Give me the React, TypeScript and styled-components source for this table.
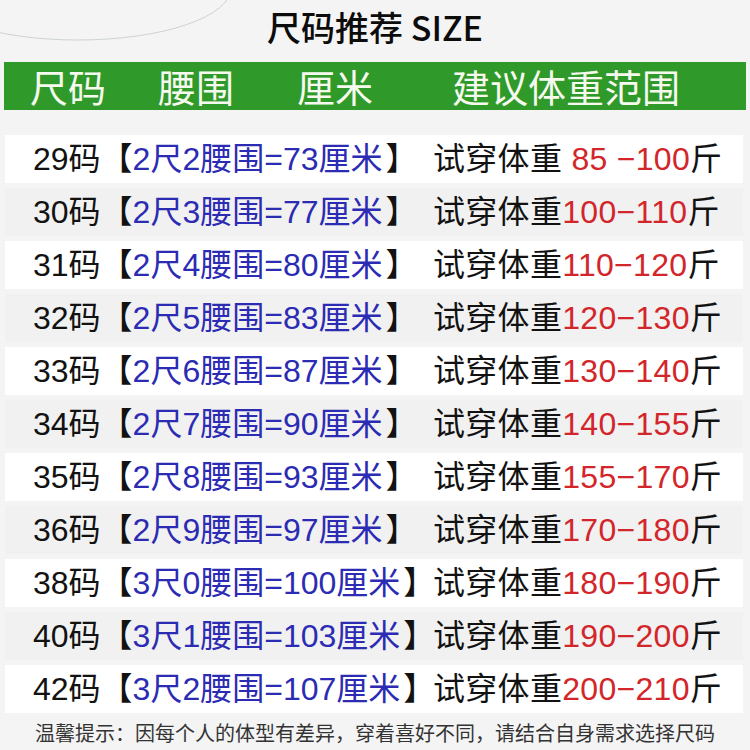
import React from "react";
import styled, { createGlobalStyle } from "styled-components";

const GlobalStyle = createGlobalStyle`
  html, body {
    margin: 0;
    padding: 0;
    background: #f4f4f4;
  }
  * { box-sizing: border-box; }
`;

const Page = styled.div`
  position: relative;
  width: 750px;
  height: 750px;
  overflow: hidden;
  background: #f4f4f4;
  font-family: "Liberation Sans", "Noto Sans CJK SC", sans-serif;
  color: #111;
`;

const Decor = styled.svg`
  position: absolute;
  left: 0;
  top: 0;
  pointer-events: none;
`;

const Title = styled.h1`
  margin: 0;
  height: 62px;
  padding-bottom: 10px;
  display: flex;
  align-items: center;
  justify-content: center;
  font-family: "Noto Sans CJK SC", sans-serif;
  font-size: 34px;
  font-weight: 500;
  color: #0c0c0c;
`;

const HeaderBar = styled.div`
  margin: 0 4px;
  height: 48px;
  background: #2f9a2a;
  display: grid;
  grid-template-columns: 128px 139px 155px auto;
  align-items: center;
  padding-left: 26px;
  font-family: "Noto Sans CJK SC", sans-serif;
  font-size: 38px;
  font-weight: 400;
  color: #f6f9ee;
  line-height: 48px;
`;

const HeaderCell = styled.span`
  white-space: nowrap;
`;

const Rows = styled.div`
  margin: 25px 7px 0 5px;
  display: flex;
  flex-direction: column;
  gap: 5px;
`;

const Row = styled.div<{ $alt: boolean }>`
  height: 48px;
  background: ${(p) => (p.$alt ? "#f1f1f1" : "#ffffff")};
  display: grid;
  grid-template-columns: 400px auto;
  align-items: center;
  padding-left: 28px;
  font-size: 32px;
  line-height: 48px;
  white-space: nowrap;
  color: #121212;
`;

const SizeCell = styled.div`
  white-space: nowrap;
`;

const Close = styled.span`
  margin-left: 3px;
`;

const WeightCell = styled.div`
  white-space: nowrap;
  letter-spacing: 0.3px;
`;

const Blue = styled.span`
  color: #2b2bb3;
`;

const Red = styled.span`
  color: #d3262b;
`;

const Footer = styled.div`
  height: 38px;
  display: flex;
  align-items: center;
  justify-content: center;
  font-family: "Noto Sans CJK SC", sans-serif;
  font-size: 20px;
  color: #333;
`;

type Item = { size: string; chi: string; cm: string; weight: string };

const data: Item[] = [
  { size: "29", chi: "2尺2", cm: "73", weight: " 85 −100" },
  { size: "30", chi: "2尺3", cm: "77", weight: "100−110" },
  { size: "31", chi: "2尺4", cm: "80", weight: "110−120" },
  { size: "32", chi: "2尺5", cm: "83", weight: "120−130" },
  { size: "33", chi: "2尺6", cm: "87", weight: "130−140" },
  { size: "34", chi: "2尺7", cm: "90", weight: "140−155" },
  { size: "35", chi: "2尺8", cm: "93", weight: "155−170" },
  { size: "36", chi: "2尺9", cm: "97", weight: "170−180" },
  { size: "38", chi: "3尺0", cm: "100", weight: "180−190" },
  { size: "40", chi: "3尺1", cm: "103", weight: "190−200" },
  { size: "42", chi: "3尺2", cm: "107", weight: "200−210" },
];

export default function App() {
  return (
    <>
      <GlobalStyle />
      <Page>
        <Decor width="260" height="60" viewBox="0 0 260 60">
          <ellipse cx="78" cy="-12" rx="153" ry="52" fill="none" stroke="#cdd3d3" strokeWidth="1" />
        </Decor>
        <Title>尺码推荐 SIZE</Title>
        <HeaderBar>
          <HeaderCell>尺码</HeaderCell>
          <HeaderCell>腰围</HeaderCell>
          <HeaderCell>厘米</HeaderCell>
          <HeaderCell>建议体重范围</HeaderCell>
        </HeaderBar>
        <Rows>
          {data.map((d, i) => (
            <Row key={d.size} $alt={i % 2 === 1}>
              <SizeCell>
                {d.size}码【<Blue>{d.chi}腰围={d.cm}厘米</Blue>
                <Close>】</Close>
              </SizeCell>
              <WeightCell>
                试穿体重<Red>{d.weight}</Red>斤
              </WeightCell>
            </Row>
          ))}
        </Rows>
        <Footer>温馨提示：因每个人的体型有差异，穿着喜好不同，请结合自身需求选择尺码</Footer>
      </Page>
    </>
  );
}
